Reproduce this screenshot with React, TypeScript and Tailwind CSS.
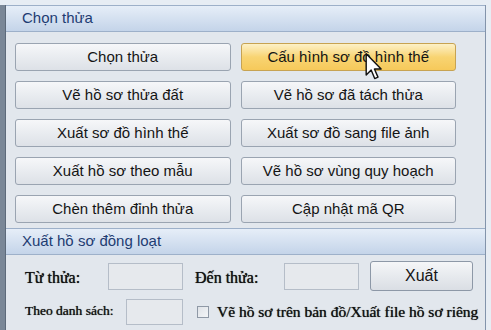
import React from "react";

const sans = { fontFamily: "'Liberation Sans', Arial, sans-serif" };
const serif = { fontFamily: "'Liberation Serif', 'DejaVu Serif', serif" };

const buttons: [string, string][] = [
  ["Chọn thửa", "Cấu hình sơ đồ hình thế"],
  ["Vẽ hồ sơ thửa đất", "Vẽ hồ sơ đã tách thửa"],
  ["Xuất sơ đồ hình thế", "Xuất sơ đồ sang file ảnh"],
  ["Xuất hồ sơ theo mẫu", "Vẽ hồ sơ vùng quy hoạch"],
  ["Chèn thêm đỉnh thửa", "Cập nhật mã QR"],
];

const Btn = ({ label, hot = false }: { label: string; hot?: boolean }) => (
  <button
    type="button"
    className={`h-[28px] rounded-[3px] border text-[15px] text-[#141414] ${
      hot
        ? "border-[#c7a352] bg-gradient-to-b from-[#fdf1c6] via-[#f8d472] to-[#f6c95a]"
        : "border-[#9aa4b1] bg-gradient-to-b from-[#f6f7f9] via-[#e9ecf0] to-[#dde1e7]"
    }`}
    style={sans}
  >
    {label}
  </button>
);

const Header = ({ title }: { title: string }) => (
  <div
    className="h-[27px] flex items-center pl-[16px] text-[15px] text-[#1e3c72] bg-gradient-to-b from-[#e6eef8] to-[#c4d4e9] border-y border-[#9db0c9]"
    style={sans}
  >
    {title}
  </div>
);

// labels in the lower box look heavier than plain serif (blurred capture)
const lbl = "text-[#111] [text-shadow:0_0_0.7px_#222]";

export default function App() {
  return (
    <div className="relative w-[491px] h-[330px] overflow-hidden flex flex-col bg-[#e9eef4]">
      <div className="h-[5px] bg-[#e7edf4]" />
      <div className="flex flex-1">
        <div className="w-[6px] bg-[#7a8797] border-r border-[#5d6a7a]" />
        <div className="flex-1 flex flex-col bg-[#e2e7ed] border-r border-[#8394ab]">
          <Header title="Chọn thửa" />
          <div className="grid grid-cols-2 gap-x-[10px] gap-y-[10px] pl-[9px] pr-[29px] pt-[11px] pb-[5px]">
            {buttons.map(([a, b], i) => (
              <React.Fragment key={i}>
                <Btn label={a} />
                <Btn label={b} hot={i === 0} />
              </React.Fragment>
            ))}
          </div>
          <Header title="Xuất hồ sơ đồng loạt" />
          <div className="flex flex-col pl-[19px] pt-[6px]">
            <div className="flex items-center h-[30px]">
              <span className={`w-[83px] text-[16px] pt-[4px] ${lbl}`} style={serif}>
                Từ thửa:
              </span>
              <div className="w-[75px] h-[27px] border border-[#b5bdc8] bg-[#e6e9ed]" />
              <span className={`ml-[12px] w-[89px] text-[16px] pt-[4px] ${lbl}`} style={serif}>
                Đến thửa:
              </span>
              <div className="w-[75px] h-[27px] border border-[#b5bdc8] bg-[#e6e9ed]" />
              <button
                type="button"
                className="ml-[11px] w-[103px] h-[30px] rounded-[3px] border border-[#8d98a7] bg-gradient-to-b from-[#f5f6f8] via-[#e7eaee] to-[#dadee4] text-[16px] text-[#141414]"
                style={sans}
              >
                Xuất
              </button>
            </div>
            <div className="flex items-center h-[27px] mt-[7px]">
              <span className={`w-[101px] text-[13.5px] ${lbl}`} style={serif}>
                Theo danh sách:
              </span>
              <div className="w-[57px] h-[26px] border border-[#b5bdc8] bg-[#e6e9ed]" />
              <div className="ml-[14px] w-[12px] h-[12px] border border-[#8f99a6] bg-gradient-to-br from-[#dfe3e8] to-[#f3f5f7]" />
              <span className={`ml-[8px] text-[15.5px] whitespace-nowrap ${lbl}`} style={serif}>
                Vẽ hồ sơ trên bản đồ/Xuất file hồ sơ riêng
              </span>
            </div>
          </div>
        </div>
        <div className="w-[5px] bg-[#e7edf4]" />
      </div>
      <svg
        className="absolute left-[365px] top-[53px]"
        width="18"
        height="27"
        viewBox="0 0 12 19"
      >
        <path
          d="M0.5 0.5 L0.5 15.5 L4 12 L6.5 18 L8.8 17 L6.3 11.3 L11 11.3 Z"
          fill="#fff"
          stroke="#111"
          strokeWidth="1"
          strokeLinejoin="round"
        />
      </svg>
    </div>
  );
}
